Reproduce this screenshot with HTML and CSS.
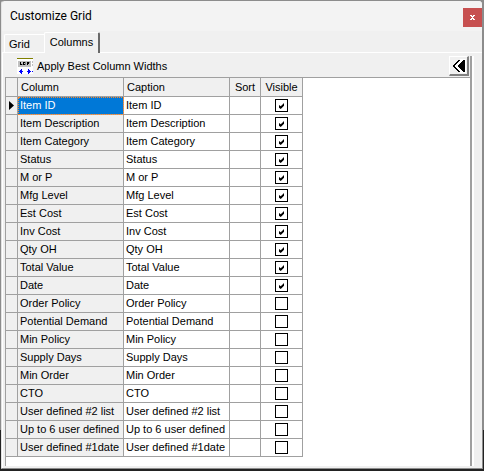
FILE: index.html
```
<!DOCTYPE html>
<html lang="en">
<head>
    <meta charset="utf-8">
    <title>Customize Grid</title>
    <link rel="stylesheet" href="styles.css">
</head>
<body>
    <div class="window">
        <header class="titlebar">
            <h1>Customize Grid</h1>
            <button type="button" class="close" aria-label="Close">
                <svg width="5" height="5" viewBox="0 0 5 5" shape-rendering="crispEdges"><path fill="#fff" d="M0 0h2v1h1v-1h2v1h-1v1h-1v1h1v1h1v1h-2v-1h-1v1h-2v-1h1v-1h1v-1h-1v-1h-1z"/></svg>
            </button>
        </header>
        <div class="tabs" role="tablist">
            <button type="button" class="tab" role="tab" aria-selected="false">Grid</button>
            <button type="button" class="tab active" role="tab" aria-selected="true">Columns</button>
        </div>
        <div class="page">
            <div class="panel">
                <div class="toolbar">
                    <button type="button" class="best-fit">
                        <svg width="16" height="16" viewBox="0 0 16 16" shape-rendering="crispEdges">
                            <path fill="#fff" d="M0 1h16v15h-16z"/>
                            <path fill="#808000" d="M0 0h16v1h-16z"/>
                            <path fill="#c0c0c0" d="M1 3h13v6h-13zM15 3h1v2h-1zM15 6h1v2h-1z"/>
                            <path fill="#000" d="M3 4h1v2h1v1h-2zM6 4h2v1h-1v1h1v1h-2zM10 4h2v2h-1v1h-1z"/>
                            <path fill="#808080" d="M5 6h1v1h-1zM8 4h1v3h-1zM12 4h1v1h-1z"/>
                            <path fill="#00f" d="M2 13h1v-1h1v-1h1v5h-1v-1h-1v-1h-1zM5 13h1v1h-1zM14 13h-1v-1h-1v-1h-1v5h1v-1h1v-1h1zM10 13h1v1h-1zM15 13h1v1h-1z"/>
                        </svg>
                        <span>Apply Best Column Widths</span>
                    </button>
                    <button type="button" class="collapse" aria-label="Collapse">
                        <svg width="14" height="14" viewBox="0 0 14 14" shape-rendering="crispEdges"><path fill="#fff" d="M1 7l7-7h6v14h-6z"/><path fill="#000" d="M0 7l6-6h2l-6 6 6 6h-2zM5 7l6-6h2v12h-2z"/></svg>
                    </button>
                </div>
                <div class="grid-area">
                    <table class="grid">
                        <thead>
                            <tr>
                                <th class="marker"></th>
                                <th class="name">Column</th>
                                <th class="caption">Caption</th>
                                <th class="sort">Sort</th>
                                <th class="visible">Visible</th>
                            </tr>
                        </thead>
                        <tbody id="rows"></tbody>
                    </table>
                </div>
            </div>
        </div>
    </div>

    <script src="script.js"></script>
</body>
</html>
```

FILE: styles.css
```
* {
    box-sizing: border-box;
}
body {
    margin: 0;
    min-height: 100vh;
    display: flex;
    padding: 0 1px 2px;
    background: linear-gradient(#8c8c8c 430px, #222 430px);
    font-family: "Liberation Sans", Arial, sans-serif;
    font-size: 11px;
    line-height: 14px;
    color: #000;
}
button {
    font: inherit;
    color: inherit;
    background: none;
    border: none;
    padding: 0;
}
svg {
    display: block;
}
.window {
    flex: 1;
    display: flex;
    flex-direction: column;
    background-color: #f0f0f0;
    border: 1px solid #8c8c8c;
    border-left-color: #e3e3e3;
    border-radius: 4px 4px 0 0;
}
.titlebar {
    display: flex;
    justify-content: space-between;
    align-items: center;
    height: 30px;
    padding-left: 8px;
    background-color: #f3f3f3;
    border-radius: 4px 4px 0 0;
}
.titlebar h1 {
    margin: 0;
    font-family: Roboto, "Segoe UI", sans-serif;
    font-size: 12px;
    font-weight: normal;
}
.close {
    display: flex;
    align-items: center;
    justify-content: center;
    width: 19px;
    height: 19px;
    margin-top: 2px;
    background-color: #c75050;
}
.tabs {
    display: flex;
    align-items: flex-end;
    height: 21px;
    padding-left: 2px;
}
.tab {
    height: 18px;
    padding: 0 14px 0 4px;
    border: 1px solid #fff;
    border-right: none;
    border-bottom: none;
    border-radius: 2px 0 0 0;
}
.tab.active {
    height: 21px;
    padding: 0 5px 2px;
    border-right: 2px solid #696969;
    border-radius: 2px 2px 0 0;
    margin-bottom: -1px;
    background-color: #f0f0f0;
    position: relative;
}
.page {
    flex: 1;
    display: flex;
    padding: 3px 8px 2px 2px;
    border-top: 1px solid #fff;
    border-left: 1px solid #fff;
}
.panel {
    flex: 1;
    display: flex;
    flex-direction: column;
    border-right: 2px solid #fff;
    box-shadow: inset -2px 0 #a0a0a0;
    padding-right: 2px;
}
.toolbar {
    display: flex;
    justify-content: space-between;
    height: 22px;
    padding: 0 1px 0 12px;
    border-bottom: 1px solid #a0a0a0;
}
.best-fit {
    display: flex;
    align-items: center;
    gap: 4px;
    height: 20px;
}
.collapse {
    display: flex;
    align-items: center;
    justify-content: center;
    width: 20px;
    height: 20px;
    border: 1px solid #fff;
    border-right: 2px solid #808080;
    border-bottom: 2px solid #808080;
}
.grid-area {
    flex: 1;
    background-color: #fff;
    border-left: 1px solid #a0a0a0;
}
.grid {
    border-spacing: 0;
    table-layout: fixed;
    width: 297px;
}
.grid th,
.grid td {
    height: 18px;
    padding: 0 2px 1px;
    border-right: 1px solid #a0a0a0;
    border-bottom: 1px solid #a0a0a0;
    font-weight: normal;
    text-align: left;
    white-space: nowrap;
}
.grid thead th {
    height: 19px;
    padding: 0 3px;
    background-color: #f0f0f0;
}
.grid .marker,
.grid .name {
    background-color: #f0f0f0;
}
.marker {
    width: 12px;
}
.name,
.caption {
    width: 106px;
}
.sort {
    width: 31px;
}
.visible {
    width: 42px;
}
.grid tbody .marker {
    padding: 0 3px;
}
.grid thead .sort,
.grid .visible {
    padding: 0;
    text-align: center;
}
.arrow {
    display: block;
    width: 5px;
    height: 9px;
    background-color: #000;
    clip-path: polygon(0 0, 100% 50%, 0 100%);
}
.grid .selected .name {
    background-color: #0078d7;
    color: #fff;
    outline: 1px dotted #ff8728;
    outline-offset: -1px;
}
.visible input {
    appearance: none;
    display: block;
    width: 13px;
    height: 13px;
    margin: 0 auto;
    border: 1px solid #000;
    background-color: #fff;
}
.visible input:checked::before {
    content: "";
    display: block;
    width: 5px;
    height: 6px;
    margin: 3px;
    background-color: #000;
    clip-path: polygon(0 35%, 35% 55%, 100% 0, 100% 45%, 35% 100%, 0 80%);
}
```

FILE: script.js
```
const columns = [
    ["Item ID", true],
    ["Item Description", true],
    ["Item Category", true],
    ["Status", true],
    ["M or P", true],
    ["Mfg Level", true],
    ["Est Cost", true],
    ["Inv Cost", true],
    ["Qty OH", true],
    ["Total Value", true],
    ["Date", true],
    ["Order Policy", false],
    ["Potential Demand", false],
    ["Min Policy", false],
    ["Supply Days", false],
    ["Min Order", false],
    ["CTO", false],
    ["User defined #2 list", false],
    ["Up to 6 user defined", false],
    ["User defined #1date", false]
];

const rows = document.getElementById("rows");

columns.forEach(([name, visible], i) => {
    const row = document.createElement("tr");
    if (i === 0) {
        row.className = "selected";
    }
    row.innerHTML = `
        <td class="marker">${i === 0 ? '<span class="arrow"></span>' : ""}</td>
        <td class="name">${name}</td>
        <td class="caption">${name}</td>
        <td class="sort"></td>
        <td class="visible"><input type="checkbox" aria-label="Show ${name}" ${visible ? "checked" : ""}></td>`;
    rows.appendChild(row);
});
```
